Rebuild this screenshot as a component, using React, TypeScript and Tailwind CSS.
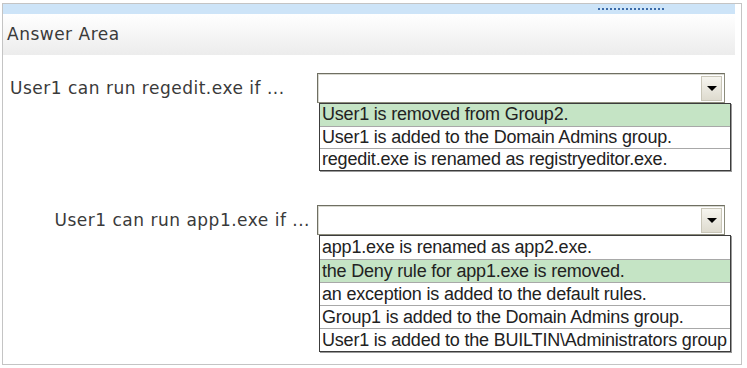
const options1 = [
  "User1 is removed from Group2.",
  "User1 is added to the Domain Admins group.",
  "regedit.exe is renamed as registryeditor.exe.",
];

const options2 = [
  "app1.exe is renamed as app2.exe.",
  "the Deny rule for app1.exe is removed.",
  "an exception is added to the default rules.",
  "Group1 is added to the Domain Admins group.",
  "User1 is added to the BUILTIN\\Administrators group",
];

const DropBox = ({ items, picked, tall }: { items: string[]; picked: number; tall?: boolean }) => {
  return (
    <div className="flex flex-col">
      {/* select */}
      <div className="h-[30px] w-[408px] border border-[#8c8c7c] border-t-[#6f6f62] border-l-[#6f6f62] bg-white flex justify-end items-center pr-[2px] shadow-[inset_1px_1px_0_#d8d8d0]">
        <div className="w-[21px] h-[25px] bg-gradient-to-b from-[#f6f5ef] to-[#dedbcf] border border-[#c9c6b8] flex items-center justify-center">
          <div className="w-0 h-0 border-l-[5px] border-r-[5px] border-t-[5px] border-l-transparent border-r-transparent border-t-black" />
        </div>
      </div>
      {/* list */}
      <div className="ml-[2px] w-[412px] border border-[#3c3c3c] bg-white shadow-[1px_1px_0_#9a9a9a]">
        {items.map((it, i) => (
          <div
            key={i}
            className={`${tall ? "h-[23px] leading-[22px]" : "h-[22px] leading-[21px]"} pl-[2px] text-[18px] tracking-[-0.2px] whitespace-nowrap overflow-hidden text-[#222] ${i > 0 ? "border-t border-[#a8a8a8]" : ""} ${i === picked ? "bg-[#c5e4c5]" : ""}`}
            style={{ fontFamily: '"Liberation Sans", Arial, sans-serif' }}
          >
            {it}
          </div>
        ))}
      </div>
    </div>
  );
};

export default function App() {
  return (
    <div className="w-[747px] h-[368px] bg-white pl-[2px] pt-[3px]">
      <div
        className="w-[740px] h-[362px] border border-[#c4c4c4] flex flex-col text-[#3a3a3a]"
        style={{ fontFamily: '"DejaVu Sans", Verdana, sans-serif' }}
      >
        {/* top strip */}
        <div className="h-[10px] mr-[6px] bg-[#cde4f8] flex items-center">
          <div className="ml-[595px] w-[66px] border-t-2 border-dotted border-[#3b6aa8]" />
        </div>
        {/* header */}
        <div className="h-[41px] mr-[6px] bg-gradient-to-b from-white to-[#ececec] flex items-center pl-[4px] text-[17px] tracking-[0.5px]">
          Answer Area
        </div>

        {/* row 1 */}
        <div className="flex mt-[18px]">
          <div className="w-[314px] pl-[7px] pt-[3px] text-[17px] tracking-[0.5px]">User1 can run regedit.exe if ...</div>
          <DropBox items={options1} picked={0} />
        </div>

        {/* row 2 */}
        <div className="flex mt-[34px]">
          <div className="w-[314px] pr-[7px] pt-[3px] text-right text-[17px] tracking-[0.5px]">User1 can run app1.exe if ...</div>
          <DropBox items={options2} picked={1} tall />
        </div>
      </div>
    </div>
  );
}
